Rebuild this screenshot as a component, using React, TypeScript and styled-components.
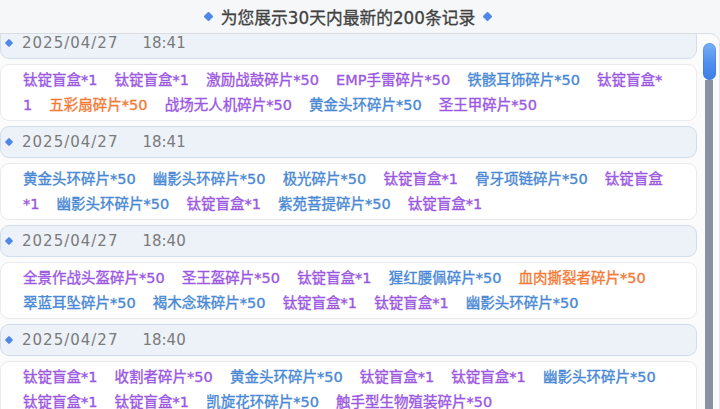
import React, { useLayoutEffect, useRef } from "react";
import styled, { createGlobalStyle } from "styled-components";

type Tone = "purple" | "blue" | "orange";

interface Reward {
  name: string;
  tone: Tone;
}

interface Record {
  date: string;
  time: string;
  rewards: Reward[];
}

const p = (name: string): Reward => ({ name, tone: "purple" });
const b = (name: string): Reward => ({ name, tone: "blue" });
const o = (name: string): Reward => ({ name, tone: "orange" });

const records: Record[] = [
  {
    date: "2025/04/27",
    time: "18:41",
    rewards: [
      p("钛锭盲盒*1"),
      p("钛锭盲盒*1"),
      p("激励战鼓碎片*50"),
      p("EMP手雷碎片*50"),
      b("铁骸耳饰碎片*50"),
      p("钛锭盲盒*1"),
      o("五彩扇碎片*50"),
      p("战场无人机碎片*50"),
      b("黄金头环碎片*50"),
      p("圣王甲碎片*50"),
    ],
  },
  {
    date: "2025/04/27",
    time: "18:41",
    rewards: [
      b("黄金头环碎片*50"),
      b("幽影头环碎片*50"),
      b("极光碎片*50"),
      p("钛锭盲盒*1"),
      b("骨牙项链碎片*50"),
      p("钛锭盲盒*1"),
      b("幽影头环碎片*50"),
      p("钛锭盲盒*1"),
      b("紫苑菩提碎片*50"),
      p("钛锭盲盒*1"),
    ],
  },
  {
    date: "2025/04/27",
    time: "18:40",
    rewards: [
      p("全景作战头盔碎片*50"),
      p("圣王盔碎片*50"),
      p("钛锭盲盒*1"),
      b("猩红腰佩碎片*50"),
      o("血肉撕裂者碎片*50"),
      b("翠蓝耳坠碎片*50"),
      b("褐木念珠碎片*50"),
      p("钛锭盲盒*1"),
      p("钛锭盲盒*1"),
      b("幽影头环碎片*50"),
    ],
  },
  {
    date: "2025/04/27",
    time: "18:40",
    rewards: [
      p("钛锭盲盒*1"),
      p("收割者碎片*50"),
      b("黄金头环碎片*50"),
      p("钛锭盲盒*1"),
      p("钛锭盲盒*1"),
      b("幽影头环碎片*50"),
      p("钛锭盲盒*1"),
      p("钛锭盲盒*1"),
      b("凯旋花环碎片*50"),
      p("触手型生物殖装碎片*50"),
    ],
  },
  {
    date: "2025/04/27",
    time: "18:39",
    rewards: [
      p("钛锭盲盒*1"),
      b("黄金头环碎片*50"),
      p("钛锭盲盒*1"),
      b("幽影头环碎片*50"),
      p("圣王甲碎片*50"),
    ],
  },
];

const toneColors: { [k in Tone]: string } = {
  purple: "#9b57e2",
  blue: "#4888d4",
  orange: "#f47a36",
};

const GlobalStyle = createGlobalStyle`
  html, body {
    margin: 0;
    padding: 0;
    background: #f6f7f9;
  }
  body {
    font-family: "DejaVu Sans", "Noto Sans CJK SC", sans-serif;
  }
`;

const Page = styled.div`
  width: 720px;
  height: 409px;
  display: flex;
  flex-direction: column;
  overflow: hidden;
  background: #f6f7f9;
`;

const Title = styled.div`
  height: 33px;
  flex: none;
  display: flex;
  align-items: center;
  justify-content: center;
  gap: 9px;
  padding-right: 24px;
  font-size: 16.75px;
  color: #414141;
  -webkit-text-stroke: 0.3px currentColor;
`;

const Diamond = styled.span<{ $size: number }>`
  flex: none;
  width: ${(props) => props.$size}px;
  height: ${(props) => props.$size}px;
  background: #4f87e8;
  transform: rotate(45deg);
  border-radius: 1px;
`;

const Panel = styled.div`
  flex: 1;
  min-height: 0;
  display: flex;
  border-top: 1px solid #dadde4;
  border-right: 1px solid #e4e6eb;
  border-top-right-radius: 10px;
  background: #fbfbfc;
`;

const List = styled.div`
  flex: 1;
  min-width: 0;
  overflow-y: auto;
  scrollbar-width: none;
  display: flex;
  flex-direction: column;
  gap: 5px;
  padding-bottom: 10px;
  &::-webkit-scrollbar {
    display: none;
  }
`;

const Group = styled.section`
  display: flex;
  flex-direction: column;
  gap: 5px;
`;

const Header = styled.div`
  height: 32px;
  flex: none;
  box-sizing: border-box;
  display: flex;
  align-items: center;
  gap: 10px;
  padding-left: 5px;
  border: 1px solid #d2ddeb;
  border-radius: 9px;
  background: #edf2f9;
  color: #7a7a7a;
  font-size: 15px;
`;

const DateText = styled.span`
  letter-spacing: 1px;
`;

const Time = styled.span`
  margin-left: 24px;
`;

/* Rewards flow as one paragraph: spaces separate the entries and hang at
   line ends, and a long entry may split anywhere like the game client does. */
const Rewards = styled.div`
  box-sizing: border-box;
  padding: 3px 27px 2px 22px;
  border: 1px solid #ebe8ee;
  border-radius: 9px;
  background: #ffffff;
  font-size: 14.5px;
  line-height: 25px;
  word-spacing: 12.5px;
  word-break: break-all;
  -webkit-text-stroke: 0.35px currentColor;
`;

const RewardName = styled.span<{ $tone: Tone }>`
  color: ${(props) => toneColors[props.$tone]};
`;

const ScrollColumn = styled.div`
  width: 22px;
  flex: none;
  display: flex;
  flex-direction: column;
  align-items: center;
  padding: 9px 0 0 2px;
  box-sizing: border-box;
`;

const Thumb = styled.div`
  width: 13px;
  height: 37px;
  flex: none;
  border-radius: 7px;
  background: linear-gradient(180deg, #79b0f6 0%, #4d8eef 55%, #3f7fe6 100%);
  box-shadow: inset 0 0 0 1px rgba(40, 100, 200, 0.25);
`;

const Rail = styled.div`
  width: 8px;
  flex: 1;
  background: #8a91a2;
`;

export default function App() {
  const listRef = useRef<HTMLDivElement>(null);

  useLayoutEffect(() => {
    if (listRef.current) listRef.current.scrollTop = 7;
  }, []);

  return (
    <>
      <GlobalStyle />
      <Page>
        <Title>
          <Diamond $size={7} />
          <span>为您展示30天内最新的200条记录</span>
          <Diamond $size={7} />
        </Title>
        <Panel>
          <List ref={listRef}>
            {records.map((record, i) => (
              <Group key={i}>
                <Header>
                  <Diamond $size={6} />
                  <span>
                    <DateText>{record.date}</DateText>
                    <Time>{record.time}</Time>
                  </span>
                </Header>
                <Rewards>
                  {record.rewards.map((reward, j) => (
                    <React.Fragment key={j}>
                      {j > 0 ? " " : null}
                      <RewardName $tone={reward.tone}>{reward.name}</RewardName>
                    </React.Fragment>
                  ))}
                </Rewards>
              </Group>
            ))}
          </List>
          <ScrollColumn>
            <Thumb />
            <Rail />
          </ScrollColumn>
        </Panel>
      </Page>
    </>
  );
}
